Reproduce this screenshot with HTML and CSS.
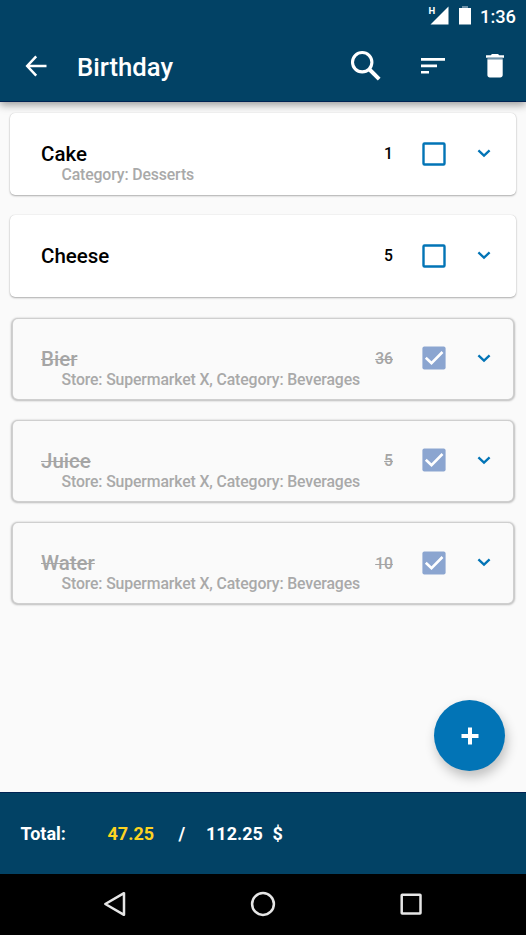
FILE: index.html
```html
<!DOCTYPE html>
<html lang="en">
<head>
<meta charset="utf-8">
<title>Birthday</title>
<link rel="stylesheet" href="styles.css">
</head>
<body>
<div class="screen">
  <header class="header">
    <div class="status">
      <svg class="signal" width="20" height="20" viewBox="2 0 20 20"><path d="M21.500 .5v18H3.500z" fill="#fff"/></svg>
      <span class="network">H</span>
      <svg class="battery" width="12" height="20" viewBox="0 0 12 20"><path d="M3 0h6v2H3z" fill="#6d91a8"/><path d="M0 2h12v16.500H0z" fill="#fff"/></svg>
      <span class="clock">1:36</span>
    </div>
    <div class="toolbar">
      <svg class="back" width="22" height="22" viewBox="0 0 22 22" fill="none" stroke="#fff" stroke-width="2.500"><path d="M11.200 1.400 2.200 11l9 9.600M2 11h19.500"/></svg>
      <h1 class="title">Birthday</h1>
      <svg class="search" width="32" height="32" viewBox="0 0 32 32" fill="none" stroke="#fff"><circle cx="12.200" cy="12.200" r="9.700" stroke-width="3.100"/><path d="m19 19 10.200 10.200" stroke-width="3.900"/></svg>
      <svg class="sort" width="24" height="16" viewBox="0 0 24 16" fill="#fff"><path d="M0 0h24v2.700H0zM0 6.500h16v2.700H0zM0 13h8v2.600H0z"/></svg>
      <svg class="trash" width="18" height="24" viewBox="0 0 18 24" fill="#fff"><path d="M0 1.200h4.700L6 0h6l1.300 1.200H18v2.500H0zM1.400 5.200h15.300V21c0 1.600-1 2.500-2.500 2.500H3.900c-1.500 0-2.500-.9-2.500-2.500z"/><path d="M1.400 3.700h15.300v1.500H1.400z" fill="#6d91a8"/></svg>
    </div>
  </header>

  <main class="list">
    <article class="card">
      <div class="info"><h2 class="name">Cake</h2><p class="detail">Category: Desserts</p></div>
      <span class="count">1</span>
      <svg class="box" width="24" height="24" viewBox="0 0 24 24"><rect x="1.500" y="1.500" width="21" height="21" rx="1" fill="none" stroke="#0274b6" stroke-width="2.400"/></svg>
      <svg class="chevron" width="14" height="9" viewBox="0 0 14 9"><path d="m1.400 1.400 5.600 5.300 5.600-5.300"/></svg>
    </article>
    <article class="card">
      <div class="info"><h2 class="name">Cheese</h2></div>
      <span class="count">5</span>
      <svg class="box" width="24" height="24" viewBox="0 0 24 24"><rect x="1.500" y="1.500" width="21" height="21" rx="1" fill="none" stroke="#0274b6" stroke-width="2.400"/></svg>
      <svg class="chevron" width="14" height="9" viewBox="0 0 14 9"><path d="m1.400 1.400 5.600 5.300 5.600-5.300"/></svg>
    </article>
    <article class="card done">
      <div class="info"><h2 class="name">Bier</h2><p class="detail">Store: Supermarket X, Category: Beverages</p></div>
      <span class="count">36</span>
      <svg class="box" width="24" height="24" viewBox="0 0 24 24"><rect x=".4" y=".4" width="23.200" height="23.200" rx="2" fill="#8ba5d0"/><path d="m3.800 11.700 5.700 5.500L20.500 6" fill="none" stroke="#fff" stroke-width="2.600"/></svg>
      <svg class="chevron" width="14" height="9" viewBox="0 0 14 9"><path d="m1.400 1.400 5.600 5.300 5.600-5.300"/></svg>
    </article>
    <article class="card done">
      <div class="info"><h2 class="name">Juice</h2><p class="detail">Store: Supermarket X, Category: Beverages</p></div>
      <span class="count">5</span>
      <svg class="box" width="24" height="24" viewBox="0 0 24 24"><rect x=".4" y=".4" width="23.200" height="23.200" rx="2" fill="#8ba5d0"/><path d="m3.800 11.700 5.700 5.500L20.500 6" fill="none" stroke="#fff" stroke-width="2.600"/></svg>
      <svg class="chevron" width="14" height="9" viewBox="0 0 14 9"><path d="m1.400 1.400 5.600 5.300 5.600-5.300"/></svg>
    </article>
    <article class="card done">
      <div class="info"><h2 class="name">Water</h2><p class="detail">Store: Supermarket X, Category: Beverages</p></div>
      <span class="count">10</span>
      <svg class="box" width="24" height="24" viewBox="0 0 24 24"><rect x=".4" y=".4" width="23.200" height="23.200" rx="2" fill="#8ba5d0"/><path d="m3.800 11.700 5.700 5.500L20.500 6" fill="none" stroke="#fff" stroke-width="2.600"/></svg>
      <svg class="chevron" width="14" height="9" viewBox="0 0 14 9"><path d="m1.400 1.400 5.600 5.300 5.600-5.300"/></svg>
    </article>
  </main>

  <div class="fab"><svg width="18" height="18" viewBox="0 0 18 18"><path d="M9 .5v17M.5 9h17" stroke="#fff" stroke-width="4"/></svg></div>

  <footer class="total">
    <span class="label">Total:</span>
    <span class="spent">47.25</span>
    <span class="slash">/</span>
    <span class="sum">112.25</span>
    <span>$</span>
  </footer>

  <nav class="nav">
    <svg width="24" height="26" viewBox="0 0 24 26"><path d="M21 2.200v21.600L2.300 13z"/></svg>
    <svg width="26" height="26" viewBox="0 0 26 26"><circle cx="13" cy="13" r="10.900"/></svg>
    <svg width="24" height="26" viewBox="0 0 24 26"><rect x="2.700" y="3.700" width="18.800" height="18.800" rx=".5"/></svg>
  </nav>
</div>
</body>
</html>
```
FILE: styles.css
```css
* { box-sizing: border-box; }

body {
  margin: 0;
  background: #fafafa;
  font-family: Roboto, "Liberation Sans", sans-serif;
  font-weight: 500;
}

svg { display: block; flex: none; }
h1, h2, p { margin: 0; font-weight: 500; }

.screen {
  position: relative;
  display: flex;
  flex-direction: column;
  width: 526px;
  height: 935px;
  overflow: hidden;
}

.header {
  height: 102px;
  flex: none;
  background: #024265;
  border-bottom: 1px solid #002353;
  box-shadow: 0 3px 8px rgba(0, 0, 0, .38);
  color: #fff;
}

.status {
  position: relative;
  display: flex;
  justify-content: flex-end;
  height: 32px;
  padding: 6px 10px 0 0;
}
.signal { margin: 0 10px 0 0; }
.network {
  position: absolute;
  left: 428.500px;
  top: 5px;
  font-size: 9.500px;
  line-height: 11px;
  font-weight: 700;
}
.battery { margin-right: 9px; }
.clock { width: 36px; font-size: 18.300px; line-height: 21px; white-space: nowrap; }

.toolbar {
  display: flex;
  align-items: center;
  height: 67px;
  padding: 0 22px 0 25px;
}
.title { flex: 1; margin: 3px 0 0 30px; font-size: 25.700px; line-height: 32px; }
.search { margin-right: 39px; }
.sort { margin-right: 41px; }

.list {
  flex: 1;
  display: flex;
  flex-direction: column;
  gap: 20.300px;
  padding: 10.500px 10px 0;
}

.card {
  display: flex;
  align-items: center;
  flex: none;
  height: 82px;
  padding: 0 25px 0 31px;
  border-radius: 5px;
  background: #fff;
  box-shadow: 0 1px 2px rgba(0, 0, 0, .3), 0 0 1px rgba(0, 0, 0, .2);
}
.info { flex: 1; height: 24px; white-space: nowrap; }
.name { font-size: 20.500px; line-height: 24px; color: #000; }
.detail { padding-left: 20.500px; font-size: 15.800px; letter-spacing: -.13px; line-height: 17.500px; color: #a9a9a9; }
.count { font-size: 15.700px; line-height: 20px; margin: 1px 29px 0 0; color: #000; }
.box { margin-right: 31px; }
.chevron { fill: none; stroke: #0274b6; stroke-width: 2.300; }

.done {
  height: 80px;
  margin: 1.500px 3px .5px 2.500px;
  padding: 0 22px 0 28.500px;
  background: #fafafa;
  box-shadow: 0 0 0 1px #cfcfcf, 0 .5px 2px 1.500px rgba(0, 0, 0, .25);
}
.done .box, .done .chevron { margin-top: -1px; }
.done .name, .done .count { color: #a5a5a5; text-decoration: line-through; text-decoration-thickness: 1px; }

.fab {
  position: absolute;
  left: 434px;
  top: 700px;
  display: flex;
  align-items: center;
  justify-content: center;
  width: 71px;
  height: 71px;
  border-radius: 50%;
  background: #0274b6;
  box-shadow: 2px 6px 12px rgba(0, 0, 0, .24);
}

.total {
  display: flex;
  align-items: center;
  flex: none;
  height: 82px;
  padding-left: 20.500px;
  border-top: 1px solid #002353;
  background: #024265;
  color: #fff;
  font-size: 18px;
  font-weight: 700;
}
.label { width: 87px; }
.spent { width: 71px; color: #fdd321; }
.slash { width: 27.500px; }
.sum { width: 66.500px; }

.nav {
  display: flex;
  justify-content: space-between;
  align-items: center;
  flex: none;
  height: 61px;
  padding: 0 103px 1px;
  background: #000;
  fill: none;
  stroke: #e6e6e6;
  stroke-width: 2.500;
  stroke-linejoin: round;
}
```
